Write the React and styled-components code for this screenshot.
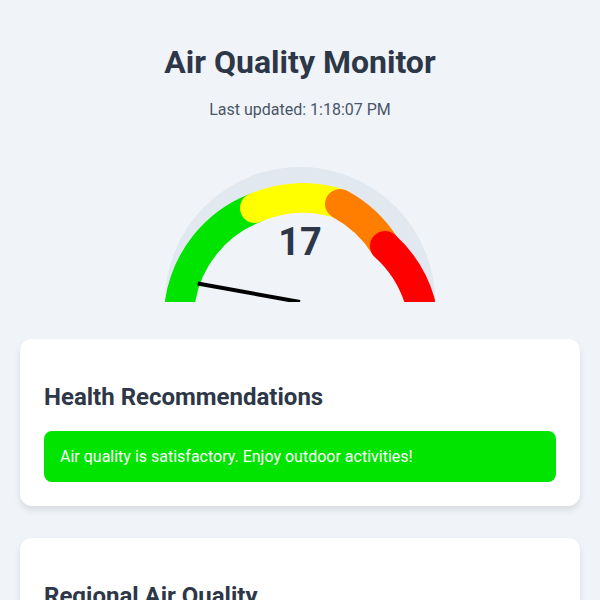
import styled, { createGlobalStyle } from 'styled-components';

const GlobalStyle = createGlobalStyle`
  body {
    margin: 0;
    background: #f0f4f8;
    font-family: Roboto, "Liberation Sans", sans-serif;
  }
`;

const segments = [
  { color: '#00e400', d: 'M 30 150 A 120 120 0 0 1 105 56' },
  { color: '#ffff00', d: 'M 105 56 A 120 120 0 0 1 190 52' },
  { color: '#ff7e00', d: 'M 190 52 A 120 120 0 0 1 235 94' },
  { color: '#ff0000', d: 'M 235 94 A 120 120 0 0 1 270 150' },
];

const aqi = 17;

const Gauge = ({ value }) => {
  const angle = Math.PI - (value / 300) * Math.PI;
  const x = 150 + 104 * Math.cos(angle);
  const y = 150 - 104 * Math.sin(angle);
  return (
    <GaugeSvg width="300" height="150" viewBox="0 0 300 150">
      <path d="M 30 150 A 120 120 0 0 1 270 150" fill="none" stroke="#e2e8f0" strokeWidth="30" />
      {segments.map(s => (
        <path key={s.color} d={s.d} fill="none" stroke={s.color} strokeWidth="30" strokeLinecap="round" />
      ))}
      <line x1="150" y1="150" x2={x} y2={y} stroke="#000" strokeWidth="4" />
      <GaugeValue x="150" y="103" textAnchor="middle">{value}</GaugeValue>
    </GaugeSvg>
  );
};

const App = () => {
  return (
    <Page>
      <GlobalStyle />
      <Title>Air Quality Monitor</Title>
      <Updated>Last updated: 1:18:07 PM</Updated>
      <Gauge value={aqi} />
      <Cards>
        <Card>
          <CardTitle>Health Recommendations</CardTitle>
          <Advice color="#00e400">Air quality is satisfactory. Enjoy outdoor activities!</Advice>
        </Card>
        <Card>
          <CardTitle>Regional Air Quality</CardTitle>
          <Advice color="#00e400">Downtown: Good</Advice>
        </Card>
      </Cards>
    </Page>
  );
};

const Page = styled.div`
  display: flex;
  flex-direction: column;
  align-items: center;
  padding: 43px 20px 20px;
`;

const Title = styled.h1`
  margin: 0;
  font-size: 32px;
  font-weight: 700;
  color: #2d3748;
`;

const Updated = styled.p`
  margin: 18.5px 0 0;
  font-size: 16px;
  color: #4a5568;
`;

const GaugeSvg = styled.svg`
  display: block;
  margin-top: 33px;
  overflow: hidden;
`;

const GaugeValue = styled.text`
  font-family: Roboto, "Liberation Sans", sans-serif;
  font-size: 38px;
  font-weight: 700;
  fill: #2d3748;
`;

const Cards = styled.div`
  align-self: stretch;
  display: flex;
  flex-direction: column;
  gap: 32px;
  margin-top: 37px;
`;

const Card = styled.div`
  background: #fff;
  border-radius: 12px;
  padding: 24px;
  box-shadow: 0 4px 6px rgba(0, 0, 0, 0.1);
`;

const CardTitle = styled.h2`
  margin: 20px 0;
  font-size: 24px;
  font-weight: 700;
  color: #2d3748;
`;

const Advice = styled.div`
  background: ${p => p.color};
  color: #fff;
  border-radius: 8px;
  padding: 16px;
  font-size: 16px;
`;

export default App;
